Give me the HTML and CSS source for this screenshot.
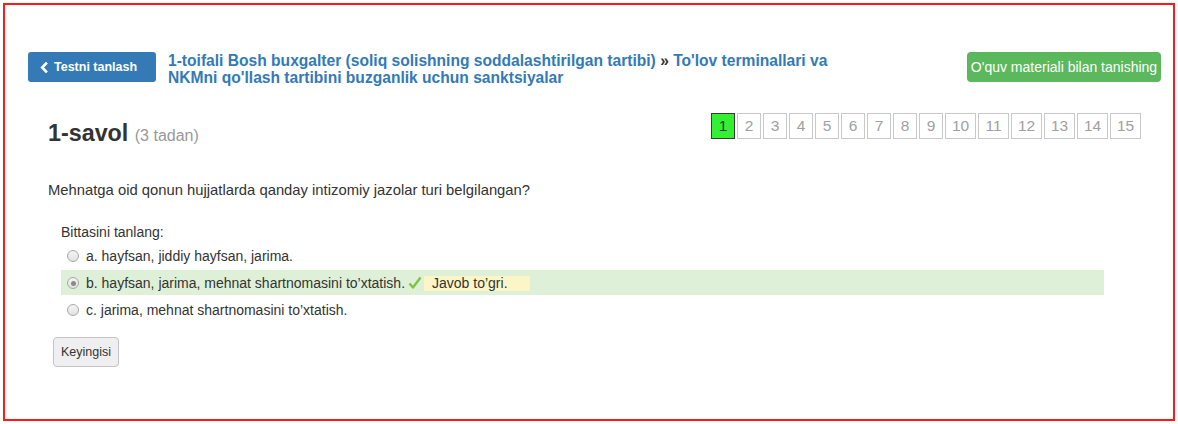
FILE: index.html
```html
<!DOCTYPE html>
<html lang="uz">
<head>
<meta charset="utf-8">
<title>1-savol</title>
<link rel="stylesheet" href="styles.css">
</head>
<body>
<div class="frame">
  <div class="header">
    <a class="btn-back" href="#">
      <svg class="chev" width="8" height="11" viewBox="0 0 8 11" aria-hidden="true"><polyline points="6,1.5 2.2,5.5 6,9.5" fill="none" stroke="#fff" stroke-width="2.6" stroke-linecap="square"/></svg>
      <span>Testni tanlash</span>
    </a>
    <div class="title"><a href="#">1-toifali Bosh buxgalter (soliq solishning soddalashtirilgan tartibi)</a> <span class="sep">»</span> <a href="#">To'lov terminallari va NKMni qo'llash tartibini buzganlik uchun sanktsiyalar</a></div>
    <a class="btn-green" href="#">O'quv materiali bilan tanishing</a>
  </div>

  <div class="content">
    <div class="qhead">
      <h2 class="qtitle">1-savol <small>(3 tadan)</small></h2>
      <div class="pager">
        <span class="pg active">1</span>
        <span class="pg">2</span>
        <span class="pg">3</span>
        <span class="pg">4</span>
        <span class="pg">5</span>
        <span class="pg">6</span>
        <span class="pg">7</span>
        <span class="pg">8</span>
        <span class="pg">9</span>
        <span class="pg wide">10</span>
        <span class="pg wide">11</span>
        <span class="pg wide">12</span>
        <span class="pg wide">13</span>
        <span class="pg wide">14</span>
        <span class="pg wide">15</span>
      </div>
    </div>

    <p class="question">Mehnatga oid qonun hujjatlarda qanday intizomiy jazolar turi belgilangan?</p>

    <div class="answers">
      <div class="prompt">Bittasini tanlang:</div>
      <div class="opt"><span class="radio"></span><span>a. hayfsan, jiddiy hayfsan, jarima.</span></div>
      <div class="opt correct"><span class="radio checked"></span><span>b. hayfsan, jarima, mehnat shartnomasini to’xtatish.</span><svg class="tick" width="14" height="14" viewBox="0 0 14 14" aria-hidden="true"><path d="M1.5 7.5 L5 11.5 L12.5 1.5" fill="none" stroke="#80c342" stroke-width="2.4" stroke-linejoin="round"/></svg><span class="feedback">Javob to’gri.</span></div>
      <div class="opt"><span class="radio"></span><span>c. jarima, mehnat shartnomasini to’xtatish.</span></div>
    </div>

    <button class="btn-next" type="button">Keyingisi</button>
  </div>
</div>
</body>
</html>
```

FILE: styles.css
```css
html, body {
  margin: 0;
  padding: 0;
  background: #fff;
}

body {
  font-family: "Liberation Sans", Arial, sans-serif;
  color: #333;
  font-size: 14px;
}

.frame {
  margin: 3px;
  height: 418px;
  box-sizing: border-box;
  border: 2px solid #ff1a1a;
  padding: 47px 12px 0 23px;
}

.header {
  display: flex;
  align-items: flex-start;
}

.btn-back {
  display: flex;
  align-items: center;
  box-sizing: border-box;
  width: 128px;
  height: 30px;
  padding-left: 12px;
  background: #337ab7;
  border-radius: 3px;
  color: #fff;
  font-weight: bold;
  font-size: 12.5px;
  text-decoration: none;
  flex: 0 0 auto;
}

.chev {
  margin-right: 6px;
}

.title {
  width: 690px;
  margin-left: 12px;
  font-size: 15.6px;
  font-weight: bold;
  line-height: 17px;
}

.title a {
  color: #337ab7;
  text-decoration: none;
}

.title .sep {
  color: #333;
}

.btn-green {
  margin-left: auto;
  box-sizing: border-box;
  height: 30px;
  line-height: 30px;
  width: 194px;
  text-align: center;
  background: #5cb85c;
  border-radius: 4px;
  color: #fff;
  font-size: 14px;
  text-decoration: none;
}

.content {
  padding: 0 20px;
}

.qhead {
  display: flex;
  justify-content: space-between;
  align-items: flex-start;
  margin-top: 27px;
}

.qtitle {
  margin: 0;
  padding-top: 7px;
  font-size: 23.3px;
  line-height: 26px;
  font-weight: bold;
  color: #333;
}

.qtitle small {
  font-size: 16px;
  font-weight: normal;
  color: #999;
}

.pager {
  display: flex;
  gap: 2px;
}

.pg {
  box-sizing: border-box;
  width: 24px;
  height: 26px;
  line-height: 24px;
  text-align: center;
  border: 1px solid #c9c9c9;
  font-size: 15.5px;
  color: #a0a0a0;
}

.pg.wide {
  width: 31px;
}

.pg.active {
  background: #33f033;
  border-color: #3a3a3a;
  color: #333;
}

.question {
  margin: 32px 0 0;
  font-size: 14.8px;
  line-height: 18px;
}

.answers {
  display: flex;
  flex-direction: column;
  gap: 2px;
  margin: 24px 37px 0 13px;
}

.prompt {
  line-height: 18px;
}

.opt {
  display: flex;
  align-items: center;
  box-sizing: border-box;
  height: 25px;
  padding: 1px 6px 0;
  line-height: 18px;
}

.opt.correct {
  background: #dff0d8;
}

.radio {
  box-sizing: border-box;
  width: 12px;
  height: 12px;
  margin-right: 7px;
  border: 1px solid #a8a8a8;
  border-radius: 50%;
  background: linear-gradient(#f4f4f4, #e2e2e2);
  position: relative;
  flex: 0 0 auto;
}

.radio.checked::after {
  content: "";
  position: absolute;
  left: 2.5px;
  top: 2.5px;
  width: 5px;
  height: 5px;
  border-radius: 50%;
  background: #8a8a8a;
}

.tick {
  margin-left: 3px;
  margin-right: 2px;
}

.feedback {
  display: inline-block;
  background: #fcf6c7;
  line-height: 15px;
  padding: 0 22px 0 8px;
}

.btn-next {
  margin: 14.5px 0 0 5px;
  box-sizing: border-box;
  width: 66px;
  height: 30px;
  padding: 0;
  font-family: "Liberation Sans", Arial, sans-serif;
  font-size: 12.5px;
  color: #333;
  background: #efeff2;
  border: 1px solid #c4c4c4;
  border-radius: 4px;
}
```
